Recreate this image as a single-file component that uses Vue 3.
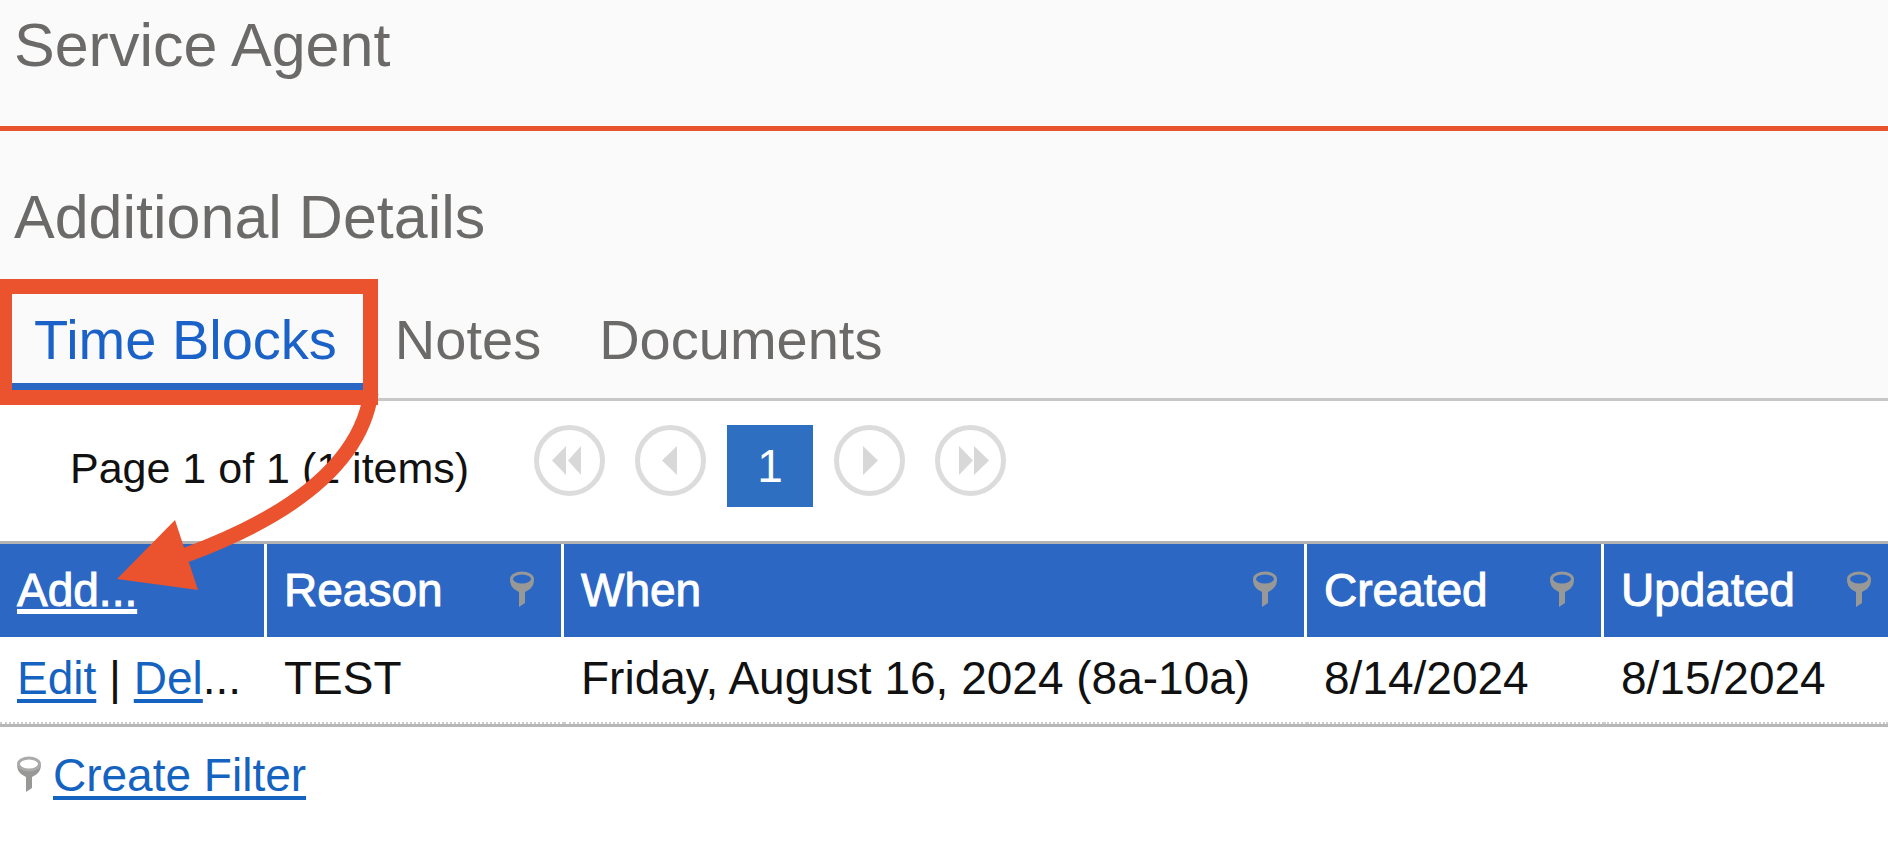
<script setup>
import { ref } from 'vue'

const tabs = ['Time Blocks', 'Notes', 'Documents']
const active = ref('Time Blocks')

const columns = [
  { key: 'reason', label: 'Reason' },
  { key: 'when', label: 'When' },
  { key: 'created', label: 'Created' },
  { key: 'updated', label: 'Updated' },
]

const rows = [
  {
    id: 1,
    reason: 'TEST',
    when: 'Friday, August 16, 2024 (8a-10a)',
    created: '8/14/2024',
    updated: '8/15/2024',
  },
]

const back = [
  { label: 'First page', path: 'M32 21V50L18 35.5ZM47 21V50L34 35.5Z' },
  { label: 'Previous page', path: 'M42 21V50L27 35.5Z' },
]
const forward = [
  { label: 'Next page', path: 'M29 21V50L44 35.5Z' },
  { label: 'Last page', path: 'M24 21V50L38 35.5ZM39 21V50L54 35.5Z' },
]
</script>

<template>
  <main class="page">
    <header class="title-bar">
      <h1>Service Agent</h1>
    </header>

    <section class="details">
      <h2>Additional Details</h2>
      <nav class="tabs" aria-label="Additional details">
        <button
          v-for="tab in tabs"
          :key="tab"
          type="button"
          class="tab"
          :class="{ active: tab === active }"
          @click="active = tab"
        >{{ tab }}</button>
      </nav>
    </section>

    <div class="pager">
      <span class="summary">Page 1 of 1 (1 items)</span>
      <button v-for="b in back" :key="b.label" type="button" class="arrow" :aria-label="b.label" disabled>
        <svg viewBox="0 0 71 71" aria-hidden="true">
          <circle cx="35.5" cy="35.5" r="33" />
          <path :d="b.path" />
        </svg>
      </button>
      <button type="button" class="current" aria-current="page">1</button>
      <button v-for="b in forward" :key="b.label" type="button" class="arrow" :aria-label="b.label" disabled>
        <svg viewBox="0 0 71 71" aria-hidden="true">
          <circle cx="35.5" cy="35.5" r="33" />
          <path :d="b.path" />
        </svg>
      </button>
    </div>

    <table class="grid">
      <colgroup>
        <col class="c-actions" />
        <col class="c-mid" />
        <col />
        <col class="c-mid" />
        <col class="c-last" />
      </colgroup>
      <thead>
        <tr>
          <th scope="col"><a href="#add">Add...</a></th>
          <th v-for="c in columns" :key="c.key" scope="col">
            <div class="head">
              <span>{{ c.label }}</span>
              <svg class="pin" viewBox="0 0 26 38" aria-hidden="true">
                <path class="pin-body" d="M1 8C1 15 4 18 10 21V36L16 32V21C22 18 25 15 25 8C23 15 3 15 1 8Z" />
                <ellipse class="pin-ring" cx="13" cy="8" rx="10.5" ry="6" />
              </svg>
            </div>
          </th>
        </tr>
      </thead>
      <tbody>
        <tr v-for="row in rows" :key="row.id">
          <td><a href="#edit">Edit</a> | <a href="#delete">Del</a>...</td>
          <td v-for="c in columns" :key="c.key">{{ row[c.key] }}</td>
        </tr>
      </tbody>
    </table>

    <footer class="filter">
      <svg class="pin light" viewBox="0 0 26 38" aria-hidden="true">
        <path class="pin-body" d="M1 8C1 15 4 18 10 21V36L16 32V21C22 18 25 15 25 8C23 15 3 15 1 8Z" />
        <ellipse class="pin-ring" cx="13" cy="8" rx="10.5" ry="6" />
      </svg>
      <a href="#filter">Create Filter</a>
    </footer>

    <svg class="callout" viewBox="0 0 400 620" aria-hidden="true">
      <rect x="4.5" y="286.5" width="366" height="111" />
      <path d="M371 393C362 455 305 511 186 555" />
      <polygon points="117,579 175,520 198,590" />
    </svg>
  </main>
</template>

<style>
body {
  background: #fff;
}
</style>

<style scoped>
.page {
  position: relative;
  min-height: 100vh;
  overflow: hidden;
  font-family: "Liberation Sans", Arial, sans-serif;
  font-size: 46px;
  color: #111;
}
button {
  font: inherit;
  border: 0;
  padding: 0;
  background: none;
}
h1,
h2 {
  margin: 0;
  font-size: 61px;
  line-height: 84px;
  font-weight: 400;
  color: #6b6a69;
}
.title-bar {
  padding: 3px 14px 39px;
  background: #fafafa;
  border-bottom: 5px solid #e8532d;
}
.details {
  padding-top: 44px;
  background: #fafafa;
  border-bottom: 3px solid #c6c7c6;
}
h2 {
  padding: 0 14px;
}
.tabs {
  display: flex;
  padding: 35px 0 0 5px;
}
.tab {
  padding: 10px 29px 7px;
  font-size: 56px;
  line-height: 72px;
  color: #6b6a69;
  border-bottom: 15px solid transparent;
}
.tab.active {
  color: #1b62c8;
  border-bottom-color: #2a66c4;
}
.pager {
  display: flex;
  align-items: flex-start;
  padding: 24px 0 30px 70px;
}
.summary {
  margin-right: 35px;
  font-size: 43px;
  line-height: 86px;
}
.arrow {
  width: 71px;
  height: 71px;
  margin-left: 30px;
}
.arrow svg {
  display: block;
}
.arrow circle {
  fill: none;
  stroke: #dcdcdc;
  stroke-width: 5;
}
.arrow path {
  fill: #d8d8d8;
}
.current {
  width: 86px;
  height: 82px;
  margin: 0 -9px 0 21px;
  background: #2e6fc1;
  color: #fff;
}
.grid {
  width: 100%;
  table-layout: fixed;
  border-collapse: separate;
  border-spacing: 0;
  border-top: 3px solid #b4b4b4;
  border-bottom: 3px solid #b8b8b8;
}
.c-actions {
  width: 267px;
}
.c-mid {
  width: 297px;
}
.c-last {
  width: 284px;
}
th,
td {
  box-sizing: border-box;
  padding: 15px 0 18px 17px;
  line-height: 52px;
  font-weight: 400;
  text-align: left;
  white-space: nowrap;
}
th {
  padding: 20px 0 21px 17px;
  background: #2c67c3;
  color: #fff;
  border-right: 3px solid #fff;
  -webkit-text-stroke: 1px #fff;
}
th:last-child {
  border-right: 0;
}
td {
  border-bottom: 2px dotted #ccc;
}
a {
  color: #1463c0;
  text-decoration: underline;
  text-decoration-thickness: 4px;
  text-underline-offset: 5px;
  text-decoration-skip-ink: none;
}
th a {
  color: #fff;
  text-decoration-thickness: 5px;
  text-underline-offset: 3px;
}
.head {
  display: flex;
  align-items: center;
  justify-content: space-between;
  padding-right: 26px;
}
th:last-child .head {
  padding-right: 16px;
}
.pin {
  flex: none;
  width: 26px;
  height: 38px;
}
.pin-body {
  fill: #989896;
}
.pin-ring {
  fill: none;
  stroke: #989896;
  stroke-width: 3;
}
.light .pin-ring {
  stroke: #aaa;
}
.filter {
  display: flex;
  align-items: center;
  gap: 11px;
  padding: 18px 16px;
  line-height: 60px;
}
.callout {
  position: absolute;
  left: 0;
  top: 0;
  width: 400px;
  height: 620px;
  pointer-events: none;
}
.callout rect,
.callout path {
  fill: none;
  stroke: #ea532e;
  stroke-width: 15;
}
.callout polygon {
  fill: #ea532e;
}
</style>
